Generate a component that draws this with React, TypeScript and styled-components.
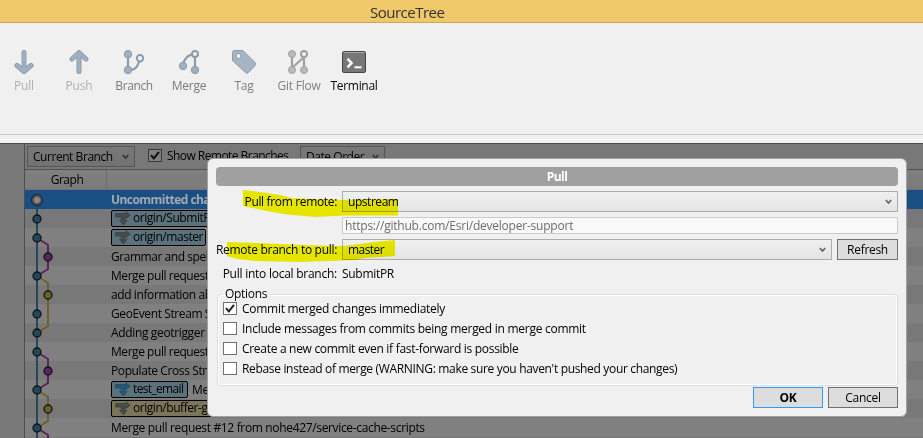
import React from "react";
import styled, { createGlobalStyle } from "styled-components";

const Global = createGlobalStyle`
  * { box-sizing: border-box; }
  html, body { margin: 0; overflow: hidden; }
  body { font: 12px/19px "Open Sans", "Noto Sans", sans-serif; color: #000; }
`;

const Window = styled.div`
  position: relative;
  width: 923px;
  height: 438px;
  overflow: hidden;
  background: #f0f0f0;
`;

/* ls is the tracking of the text in pixels */
const Text = styled.span<{ $ls?: number; $bold?: boolean }>`
  white-space: pre;
  letter-spacing: ${(p) => p.$ls ?? -0.3}px;
  font-weight: ${(p) => (p.$bold ? 700 : 400)};
`;

const TitleBar = styled.header`
  height: 23px;
  background: #efc869;
  border-bottom: 1px solid #cfa856;
  font-size: 15px;
  line-height: 24px;
  color: #333;
  padding-left: 370px;
`;

const Toolbar = styled.nav`
  height: 112px;
  border-bottom: 1px solid #c6c6c6;
  display: grid;
  grid-template-columns: repeat(7, 55px);
  margin-left: -4px;
  align-items: start;
  padding-top: 27px;
`;

const Tool = styled.div<{ $color: string }>`
  display: flex;
  flex-direction: column;
  align-items: center;
  color: ${(p) => p.$color};
  svg { display: block; margin-bottom: 2px; }
  span { padding-left: 1px; }
`;

const Strip = styled.div`
  height: 8px;
  border-bottom: 3px solid #f0f0f0;
  box-shadow: inset 0 -1px #fafafa;
`;

const Workspace = styled.main`
  height: 295px;
  background: #787878;
  border-top: 1px solid #4d4d4d;
  padding-left: 24px;
`;

const Log = styled.section`
  border-left: 1px solid #4d4d4d;
  height: 294px;
`;

const FilterBar = styled.div`
  height: 26px;
  border-bottom: 1px solid #505050;
  display: flex;
  align-items: center;
  padding-left: 2px;
`;
const Filter = styled.label`
  display: flex;
  align-items: center;
  gap: 5px;
  width: 152px;
  margin-left: 13px;
  height: 19px;
  margin-top: -2px;
`;

const Combo = styled.div<{ $w: number; $dim?: boolean }>`
  width: ${(p) => p.$w}px;
  height: 21px;
  border: 1px solid ${(p) => (p.$dim ? "#565656" : "#acacac")};
  background: ${(p) => (p.$dim ? "linear-gradient(#787878,#727272)" : "linear-gradient(#f0f0f0,#e4e4e4)")};
  display: flex;
  justify-content: space-between;
  align-items: center;
  padding: 0 5px;
  flex: none;
`;

const CheckBox = styled.span<{ $dim?: boolean }>`
  width: 14px;
  height: 13px;
  flex: none;
  display: flex;
  border: 1px solid ${(p) => (p.$dim ? "#383838" : "#707070")};
  background: ${(p) => (p.$dim ? "#808080" : "#fff")};
`;

const HeadRow = styled.div`
  height: 20px;
  display: grid;
  grid-template-columns: 82px 1fr;
  background: linear-gradient(#808080, #7b7b7b);
  text-align: center;
  border-bottom: 1px solid #727272;
`;
const HeadCell = styled.div`
  border-right: 1px solid #6c6c6c;
  padding-left: 3px;
`;

const Rows = styled.div`
  position: relative;
`;
const Graph = styled.svg`
  position: absolute;
  left: -25px;
  top: -190px;
`;
const Row = styled.div<{ $selected?: boolean }>`
  height: 19px;
  padding-left: 86px;
  display: flex;
  align-items: center;
  background: #808080;
  &:nth-child(even) { background: #787878; }
  ${(p) => p.$selected && "&&{background:#1a4f84;color:#a3a9af;}"}
`;
const Badge = styled.span<{ $bg: string; $w: number }>`
  flex: none;
  width: ${(p) => p.$w}px;
  height: 17px;
  border: 1px solid #000;
  border-radius: 2px;
  background: ${(p) => p.$bg};
  display: flex;
  align-items: center;
  gap: 2px;
  padding-left: 3px;
  margin-right: 4px;
  line-height: 13px;
  span { margin-top: -3px; }
`;

const Dialog = styled.section`
  position: absolute;
  left: 207px;
  top: 158px;
  width: 700px;
  height: 259px;
  background: #f0f0f0;
  border: 1px solid #a2a2a2;
  border-radius: 6px;
  padding: 8px;
`;
const DialogTitle = styled.h1`
  margin: 0 0 5px;
  height: 19px;
  border-radius: 4px;
  background: #a0a0a0;
  color: #fff;
  font-size: 12px;
  line-height: 19px;
  text-align: center;
`;
const Form = styled.div`
  display: grid;
  grid-template-columns: 121px 556px;
  column-gap: 5px;
  grid-template-rows: 21px 17px 21px 17px;
  row-gap: 5px;
  align-items: center;
`;
const Label = styled.label`
  text-align: right;
  white-space: nowrap;
`;
const Field = styled.div`
  grid-column: 2;
  display: flex;
  gap: 5px;
`;
const Url = styled.div`
  width: 556px;
  height: 17px;
  border: 1px solid #cacaca;
  background: #f9f9f9;
  color: #6d6d6d;
  line-height: 15px;
  padding-left: 2px;
`;
const Button = styled.button<{ $w: number; $primary?: boolean }>`
  width: ${(p) => p.$w}px;
  height: 21px;
  padding: 0;
  border: 1px solid ${(p) => (p.$primary ? "#3399ff" : "#707070")};
  background: #ddd;
  font: 12px/17px "Open Sans", "Noto Sans", sans-serif;
  color: #000;
`;
const Options = styled.fieldset`
  margin: 4px 1px 0;
  height: 100px;
  width: 681px;
  border: 1px solid #d5dfe8;
  border-radius: 4px;
  box-shadow: inset 0 0 0 1px #fff;
  padding: 0 0 0 5px;
`;
const Legend = styled.legend`
  padding: 0 2px;
  height: 16px;
  line-height: 16px;
`;
const OptionList = styled.div`
  margin-top: -4px;
`;
const Option = styled.label`
  display: flex;
  align-items: center;
  gap: 5px;
  height: 20px;
`;
const Actions = styled.div`
  display: flex;
  justify-content: flex-end;
  gap: 5px;
  margin-top: 1px;
`;
const Marker = styled.svg`
  position: absolute;
  left: 0;
  top: 0;
  mix-blend-mode: multiply;
  pointer-events: none;
`;

const Chevron = ({ color = "#606060" }) => (
  <svg width="7" height="6" viewBox="0 0 7 6"><path d="M.8 1 3.5 4 6.2 1" fill="none" stroke={color} strokeWidth="1.6" /></svg>
);
const Tick = ({ color = "#212121" }) => (
  <svg width="12" height="11" viewBox="0 0 12 11"><path d="M2 5.2 4.8 8.4 10 1.800" fill="none" stroke={color} strokeWidth="2" /></svg>
);
const Fork = ({ color = "#484b4d" }) => (
  <svg width="16" height="15" viewBox="0 0 16 15">
    <path d="M.5 2.500H11V.800L15.300 4.200 11 7.500V6H10V9.500H12L8.500 14 4.500 9.500H6.300V8Q6.300 6 4 6H.5Z" fill={color} stroke="#34393b" strokeWidth=".6" />
  </svg>
);

const B = "#9fb0c0";
const E = "#8a9bab";
const pull = "M12 2.500V20M5 15.500l7 6 7-6";
const push = "M12 21.500V4M5 9 12 2.700 19 9";
const Arrow = ({ d }: { d: string }) => (
  <g fill="none" strokeLinecap="round">
    <path d={d} stroke={E} strokeWidth="5" />
    <path d={d} stroke={B} strokeWidth="3.200" />
  </g>
);
const icons: Record<string, React.ReactNode> = {
  Pull: <Arrow d={pull} />,
  Push: <Arrow d={push} />,
  Branch: (
    <g fill={B} stroke={E}>
      <path d="M6 4v16M6 20.500C14 20 16 16 18 9" fill="none" strokeWidth="2.200" />
      <circle cx="6" cy="4.200" r="3.700" /><circle cx="6" cy="20" r="3.700" />
      <circle cx="18" cy="8.200" r="3.200" fill="#f0f0f0" strokeWidth="2" />
    </g>
  ),
  Merge: (
    <g fill={B} stroke={E}>
      <path d="M18 4v16M17 4.200Q8 5 6 15" fill="none" strokeWidth="2.200" />
      <circle cx="6" cy="16" r="3.700" /><circle cx="18" cy="20" r="3.700" />
      <circle cx="18" cy="4" r="3" fill="#f0f0f0" strokeWidth="2" />
    </g>
  ),
  Tag: (
    <g>
      <path d="M2.500.5h8.500L23 12.500Q24 14 23 15.500L16.500 22.500Q15 24 13.500 22.500L.5 10.500V2.500Q.5.5 2.500.5Z" fill="#a5b5c4" stroke={E} />
      <circle cx="6.500" cy="6" r="2.500" fill="#f0f0f0" stroke={E} />
    </g>
  ),
  "Git Flow": (
    <g fill="#bababa" stroke="#a0a0a0">
      <path d="M5 4v16M17 4v16M6 17 16 8" fill="none" strokeWidth="2.200" />
      <circle cx="5" cy="4" r="3.500" /><circle cx="5" cy="20" r="3.500" /><circle cx="17" cy="20" r="3.500" />
      <circle cx="17" cy="4" r="3" fill="#f0f0f0" strokeWidth="2" />
    </g>
  ),
  Terminal: (
    <g>
      <rect x=".5" y="1.500" width="23" height="21" rx="1.500" fill="#777" stroke="#454545" />
      <path d="M1.500 2.500h21" stroke="#aaa" />
      <path d="M5.500 8.800 9.500 13l-4 4.300" fill="none" stroke="#fff" strokeWidth="2.500" />
      <path d="M12.500 17.300h7" stroke="#fff" strokeWidth="2" />
    </g>
  ),
};
const tools: [string, string, number][] = [
  ["Pull", "#b0b0b0", -0.2], ["Push", "#b0b0b0", -0.2], ["Branch", "#7a7a7a", -0.4], ["Merge", "#7a7a7a", -0.25],
  ["Tag", "#808080", -0.2], ["Git Flow", "#808080", -0.25], ["Terminal", "#000", -0.3],
];

const blue = "#23485a", purple = "#5b2458", gold = "#6b6128";
const nodes: [number, string][] = [
  [37, blue], [37, blue], [48, purple], [37, blue], [48, gold], [37, blue], [37, blue],
  [37, blue], [48, purple], [37, blue], [48, gold], [37, blue],
];
const options: [string, number][] = [
  ["Commit merged changes immediately", -0.28],
  ["Include messages from commits being merged in merge commit", -0.27],
  ["Create a new commit even if fast-forward is possible", -0.3],
  ["Rebase instead of merge (WARNING: make sure you haven't pushed your changes)", -0.33],
];

export default function App() {
  return (
    <Window>
      <Global />
      <TitleBar><Text $ls={-0.5}>SourceTree</Text></TitleBar>
      <Toolbar>
        {tools.map(([name, color, ls]) => (
          <Tool key={name} $color={color}>
            <svg width="24" height="24" viewBox="0 0 24 24">{icons[name]}</svg>
            <Text $ls={ls}>{name}</Text>
          </Tool>
        ))}
      </Toolbar>
      <Strip />
      <Workspace>
        <Log>
          <FilterBar>
            <Combo $w={108} $dim><Text $ls={-0.45}>Current Branch</Text><Chevron color="#303030" /></Combo>
            <Filter><CheckBox $dim><Tick color="#101010" /></CheckBox><Text $ls={-0.55}>Show Remote Branches</Text></Filter>
            <Combo $w={85} $dim><Text $ls={-0.45}>Date Order</Text><Chevron color="#303030" /></Combo>
          </FilterBar>
          <HeadRow><HeadCell><Text $ls={-0.45}>Graph</Text></HeadCell></HeadRow>
          <Rows>
            <Row $selected><Text $bold $ls={-0.55}>Uncommitted changes</Text></Row>
            <Row><Badge $w={120} $bg="#5b717b"><Fork /><Text $ls={-0.45}>origin/SubmitPR</Text></Badge></Row>
            <Row><Badge $w={95} $bg="#5b717b"><Fork /><Text $ls={-0.45}>origin/master</Text></Badge></Row>
            <Row><Text $ls={-0.45}>Grammar and spell</Text></Row>
            <Row><Text $ls={-0.45}>Merge pull request</Text></Row>
            <Row><Text $ls={-0.4}>add information ab</Text></Row>
            <Row><Text $ls={-0.4}>GeoEvent Stream S</Text></Row>
            <Row><Text $ls={-0.35}>Adding geotrigger</Text></Row>
            <Row><Text $ls={-0.45}>Merge pull request</Text></Row>
            <Row><Text $ls={-0.4}>Populate Cross Stre</Text></Row>
            <Row><Badge $w={77} $bg="#5b717b"><Fork color="#1b5c80" /><Text $ls={-0.65}>test_email</Text></Badge><Text>Mer</Text></Row>
            <Row><Badge $w={120} $bg="#7b7559"><Fork /><Text $ls={-0.45}>origin/buffer-ge</Text></Badge></Row>
            <Row><Text $ls={-0.34}>Merge pull request #12 from nohe427/service-cache-scripts</Text></Row>
            <Row />
            <Graph width="110" height="438" viewBox="0 0 110 438" fill="none" strokeWidth="2">
              <path d="M37 204V438" stroke={blue} />
              <path d="M37 238 48 245V269L37 276M37 352 48 359V383L37 390M37 428 48 435V440" stroke={purple} />
              <path d="M37 276 48 283V326L37 333M37 390 48 397V421L37 428" stroke={gold} />
              <circle cx="37" cy="200" r="4" stroke="#202020" strokeWidth="4" /><circle cx="37" cy="200" r="4" fill="#888" stroke="#555" />
              {nodes.map(([x, c], i) => <circle key={i} cx={x} cy={219 + 19 * i} r="4" fill={c} stroke="#101519" strokeWidth="1.300" />)}
            </Graph>
          </Rows>
        </Log>
      </Workspace>
      <Dialog>
        <DialogTitle><Text $bold $ls={-0.5}>Pull</Text></DialogTitle>
        <Form>
          <Label><Text $ls={-0.34}>Pull from remote:</Text></Label>
          <Combo $w={556}><Text $ls={-0.45}>upstream</Text><Chevron /></Combo>
          <Field><Url><Text $ls={-0.22}>https://github.com/Esri/developer-support</Text></Url></Field>
          <Label><Text $ls={-0.3}>Remote branch to pull:</Text></Label>
          <Field><Combo $w={490}><Text $ls={-0.55}>master</Text><Chevron /></Combo><Button $w={61}><Text>Refresh</Text></Button></Field>
          <Label><Text $ls={-0.25}>Pull into local branch:</Text></Label>
          <Text $ls={-0.3}>SubmitPR</Text>
        </Form>
        <Options>
          <Legend><Text>Options</Text></Legend>
          <OptionList>
            {options.map(([o, ls], i) => <Option key={o}><CheckBox>{i === 0 && <Tick />}</CheckBox><Text $ls={ls}>{o}</Text></Option>)}
          </OptionList>
        </Options>
        <Actions>
          <Button $w={70} $primary><Text $bold>OK</Text></Button>
          <Button $w={70}><Text>Cancel</Text></Button>
        </Actions>
      </Dialog>
      <Marker width="923" height="438" viewBox="0 0 923 438" fill="#f4f400">
        <path d="M243 190l17 2 20 3 12 3 20 1 30 1 56-1V215.500H345L315 217 283 214 262 210 243 206Z" />
        <path d="M227 242l30 1 45 2 42 1 30-4 21-2V256l-30 2-10 2-55 2-43-1-20-2-10-3Z" />
      </Marker>
    </Window>
  );
}
